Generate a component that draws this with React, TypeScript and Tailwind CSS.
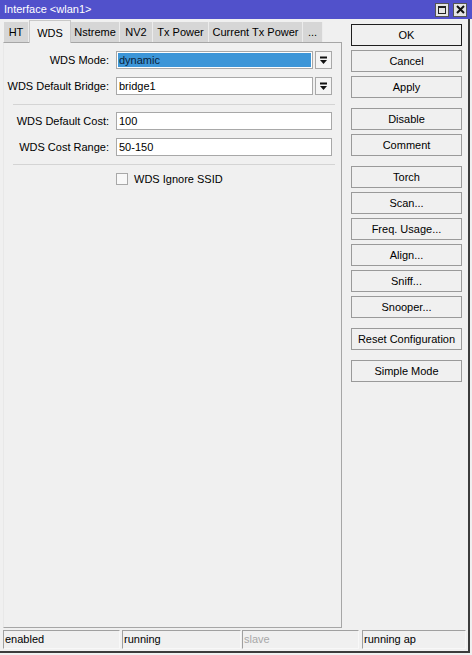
import React from 'react'

const tabs = [
  { label: 'HT', w: 'w-[25px]' },
  { label: 'WDS', w: 'w-[42px]', active: true },
  { label: 'Nstreme', w: 'w-[49px]' },
  { label: 'NV2', w: 'w-[33px]' },
  { label: 'Tx Power', w: 'w-[56px]' },
  { label: 'Current Tx Power', w: 'w-[94px]' },
  { label: '...', w: 'w-[20px]' },
]

const buttonGroups = [
  ['OK', 'Cancel', 'Apply'],
  ['Disable', 'Comment'],
  ['Torch', 'Scan...', 'Freq. Usage...', 'Align...', 'Sniff...', 'Snooper...'],
  ['Reset Configuration'],
  ['Simple Mode'],
]

function ComboArrow() {
  return (
    <svg width="9" height="9" viewBox="0 0 9 9">
      <rect x="1" y="0.5" width="7" height="2" fill="#111" />
      <polygon points="1,4 8,4 4.5,8" fill="#111" />
    </svg>
  )
}

function Label({ text }: { text: string }) {
  return <div className="w-[106px] pr-[1px] text-right shrink-0 whitespace-nowrap">{text}</div>
}

function ComboRow({ label, value, selected }: { label: string; value: string; selected?: boolean }) {
  return (
    <div className="flex items-center h-[18px]">
      <Label text={label} />
      <div
        className={
          selected
            ? 'ml-[6px] w-[197px] h-[18px] border border-[#a8a8a8] bg-white p-[1px]'
            : 'ml-[6px] w-[197px] h-[18px] border border-[#a8a8a8] bg-white'
        }
      >
        {selected ? (
          <div className="h-full bg-[#3d96d8] text-[#0b1f3a] pl-[1px] leading-[14px]">{value}</div>
        ) : (
          <div className="pl-[2px] leading-[16px]">{value}</div>
        )}
      </div>
      <div className="ml-[2px] w-[17px] h-[18px] border border-[#a8a8a8] bg-[#f4f4f4] flex items-center justify-center">
        <ComboArrow />
      </div>
    </div>
  )
}

function TextRow({ label, value }: { label: string; value: string }) {
  return (
    <div className="flex items-center h-[18px]">
      <Label text={label} />
      <div className="ml-[6px] w-[216px] h-[18px] border border-[#a8a8a8] bg-white pl-[2px] leading-[16px]">
        {value}
      </div>
    </div>
  )
}

export default function App() {
  return (
    <div className="w-[472px] h-[655px] bg-[#f0f0f0] flex flex-col font-['Liberation_Sans',Arial,sans-serif] text-[11px] text-black">
      {/* title bar */}
      <div className="h-[19px] bg-[#5151cb] flex items-center justify-between pl-[4px] pr-[5px]">
        <span className="text-white text-[11px]">Interface &lt;wlan1&gt;</span>
        <div className="flex gap-[4px]">
          <div className="w-[14px] h-[14px] bg-[#e4e4e4] border border-[#555] flex items-center justify-center">
            <div className="w-[8px] h-[8px] border border-[#222] border-t-2" />
          </div>
          <div className="w-[14px] h-[14px] bg-[#e4e4e4] border border-[#555] flex items-center justify-center">
            <svg width="9" height="9" viewBox="0 0 9 9">
              <path d="M1 1 L8 8 M8 1 L1 8" stroke="#111" strokeWidth="2" />
            </svg>
          </div>
        </div>
      </div>

      <div className="w-[470px] h-[634px] border-r-2 border-b-2 border-[#3c3c3c] flex flex-col">
        <div className="h-[609px] flex">
          {/* left: tabs + panel */}
          <div className="ml-[3px] w-[339px] flex flex-col">
            <div className="h-[23px] flex items-end pl-[1px]">
              {tabs.map((t) =>
                t.active ? (
                  <div
                    key={t.label}
                    className={`${t.w} h-[23px] mb-[-1px] relative z-10 bg-[#f0f0f0] border-t border-l border-r border-[#c8c8c8] flex items-start justify-center pt-[4px] whitespace-nowrap`}
                  >
                    {t.label}
                  </div>
                ) : (
                  <div
                    key={t.label}
                    className={`${t.w} h-[20px] bg-[#d6d6d6] border-r border-[#ececec] flex items-center justify-center whitespace-nowrap`}
                  >
                    {t.label}
                  </div>
                )
              )}
            </div>
            <div className="flex-1 border border-[#a6a6a6] border-l-[#e8e8e8] flex flex-col pt-[8px]">
              <ComboRow label="WDS Mode:" value="dynamic" selected />
              <div className="mt-[8px]">
                <ComboRow label="WDS Default Bridge:" value="bridge1" />
              </div>
              <div className="mt-[9px] ml-[9px] w-[322px] h-[1px] bg-[#d4d4d4]" />
              <div className="mt-[7px]">
                <TextRow label="WDS Default Cost:" value="100" />
              </div>
              <div className="mt-[8px]">
                <TextRow label="WDS Cost Range:" value="50-150" />
              </div>
              <div className="mt-[8px] ml-[9px] w-[322px] h-[1px] bg-[#d4d4d4]" />
              <div className="mt-[8px] flex items-center h-[12px] pl-[112px]">
                <div className="w-[12px] h-[12px] border border-[#a8a8a8] bg-[#f8f8f8]" />
                <span className="ml-[6px]">WDS Ignore SSID</span>
              </div>
            </div>
          </div>

          {/* right: buttons */}
          <div className="ml-[9px] w-[111px] pt-[5px] flex flex-col gap-[10px]">
            {buttonGroups.map((g, gi) => (
              <div key={gi} className="flex flex-col gap-[4px]">
                {g.map((b) => (
                  <div
                    key={b}
                    className={
                      b === 'OK'
                        ? 'h-[22px] border border-[#1e1e1e] bg-[#f0f0f0] flex items-center justify-center whitespace-nowrap'
                        : 'h-[22px] border border-[#9a9a9a] bg-[#f0f0f0] flex items-center justify-center whitespace-nowrap'
                    }
                  >
                    {b}
                  </div>
                ))}
              </div>
            ))}
          </div>
        </div>

        {/* status bar */}
        <div className="h-[23px] flex pt-[2px] pl-[3px]">
          <div className="w-[117px] h-[19px] border border-[#a0a0a0] border-r-[#f8f8f8] border-b-[#f8f8f8] pl-[1px] leading-[17px]">
            enabled
          </div>
          <div className="ml-[2px] w-[119px] h-[19px] border border-[#a0a0a0] border-r-[#f8f8f8] border-b-[#f8f8f8] pl-[1px] leading-[17px]">
            running
          </div>
          <div className="ml-[1px] w-[117px] h-[19px] border border-[#a0a0a0] border-r-[#f8f8f8] border-b-[#f8f8f8] pl-[1px] leading-[17px] text-[#a8a8a8]">
            slave
          </div>
          <div className="ml-[3px] w-[104px] h-[19px] border border-[#a0a0a0] border-r-[#f8f8f8] border-b-[#f8f8f8] pl-[1px] leading-[17px]">
            running ap
          </div>
        </div>
      </div>
    </div>
  )
}
